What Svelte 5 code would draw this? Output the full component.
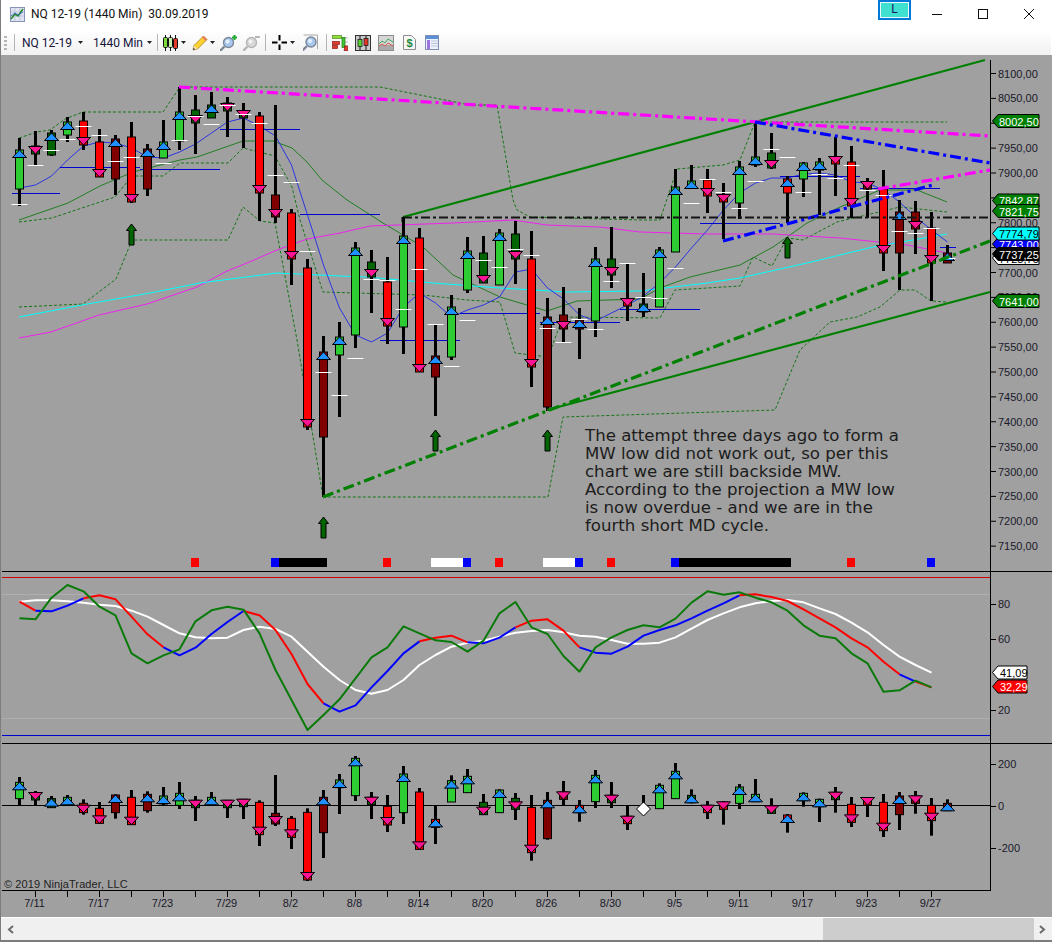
<script>
  const L = '#2ecc33', D = '#006400', R = '#ff0000', M = '#800000';
  const bx = (i) => 19.5 + 16 * i;

  // wick top, wick bottom, body top, body bottom, colour, marker, white tick
  const main = [
    [138,206,150,189,L,'u',204],[131,165,146,154,D,'d',165],[130,156,133,155,D,'u',150],[117,142,122,135,L,'u',139],
    [112,150,121,145,R,'d',126],[129,177,142,177,R,'d',135],[135,195,139,179,M,'u',161],[122,203,137,202,R,'d',157],
    [144,196,149,189,M,'u',null],[120,158,142,158,L,'u',163],[87,150,112,141,L,'u',140],[95,154,110,123,D,'d',116],
    [92,118,105,118,D,'u',124],[97,137,103,111,D,'d',105],[103,148,111,118,D,'d',114],[112,221,116,193,R,'d',123],
    [105,223,195,217,M,'d',175],[209,285,213,259,R,'d',182],[259,430,268,427,R,'d',251],[336,497,352,437,M,'u',372],
    [322,417,337,355,L,'u',395],[242,348,248,335,L,'u',358],[250,313,262,277,D,'d',279],[257,344,282,326,R,'d',280],
    [217,354,236,327,L,'u',309],[228,372,238,372,R,'d',269],[325,416,356,377,M,'u',324],[295,360,307,357,L,'u',366],
    [237,293,251,290,L,'u',320],[236,283,253,283,D,'d',260],[229,285,233,285,L,'u',267],[221,284,234,259,D,'d',249],
    [231,387,259,367,R,'d',255],[298,411,317,407,M,'u',328],[287,343,315,329,M,'d',342],[308,359,320,329,M,'u',319],
    [247,337,259,321,L,'u',329],[227,288,259,275,D,'d',281],[264,321,299,306,R,'d',263],[273,317,304,312,D,'u',297],
    [247,307,250,307,L,'u',298],[169,252,187,252,L,'u',268],[165,188,181,188,L,'u',203],[169,213,180,196,R,'d',179],
    [183,239,195,202,R,'d',192],[161,219,167,203,L,'u',208],[122,167,157,165,L,'u',181],[133,169,153,168,D,'d',149],
    [176,223,179,193,R,'u',157],[162,197,163,179,L,'u',192],[158,215,162,170,L,'u',174],[137,196,157,164,R,'d',178],
    [146,218,162,206,R,'d',165],[178,218,182,189,M,'d',190],[170,271,189,253,R,'d',195],[200,290,212,253,M,'u',231],
    [201,254,212,229,M,'d',233],[212,301,228,263,R,'d',228],[245,263,253,263,M,'u',258]
  ];

  // same layout, in rows of the third panel (reference zoom units: y = 740 + v / 3)
  const osc = [
    [111,196,127,176,L,'u'],[153,195,161,180,D,'d'],[168,204,176,203,D,'u'],[165,196,172,195,L,'u'],
    [178,224,190,218,R,'d'],[186,250,205,250,R,'d'],[163,236,165,218,M,'u'],[150,254,172,254,R,'d'],
    [154,218,163,212,M,'u'],[141,195,168,192,L,'u'],[126,207,160,196,L,'u'],[168,243,181,203,D,'d'],
    [156,195,172,194,L,'u'],[181,234,181,203,D,'d'],[178,237,178,200,D,'d'],[181,318,187,284,R,'d'],
    [105,258,220,252,M,'d'],[228,327,235,292,R,'d'],[205,423,217,420,R,'d'],[150,354,172,278,M,'u'],
    [102,222,120,143,L,'u'],[48,183,55,167,L,'u'],[156,237,172,194,D,'d'],[165,276,199,255,R,'d'],
    [78,252,102,218,L,'u'],[144,330,156,328,R,'d'],[196,312,238,262,R,'u'],[106,186,122,186,L,'u'],
    [87,158,109,158,L,'u'],[162,224,187,224,D,'d'],[148,218,150,218,L,'u'],[159,240,175,208,D,'d'],
    [165,362,202,338,R,'d'],[156,299,181,296,M,'u'],[123,196,156,178,M,'d'],[180,245,196,218,R,'u'],
    [90,204,106,185,L,'u'],[126,204,166,188,D,'d'],[196,270,229,251,R,'d'],null,
    [130,206,136,206,L,'u'],[69,176,94,176,L,'u'],[148,190,166,188,D,'u'],[183,237,196,218,R,'d'],
    [183,254,186,208,R,'d'],[132,207,141,190,L,'u'],[117,186,163,185,L,'u'],[175,220,198,220,D,'d'],
    [222,278,225,245,R,'u'],[157,200,160,182,L,'u'],[176,246,178,200,L,'u'],[141,218,157,179,D,'d'],
    [171,261,193,247,R,'d'],[173,231,173,195,R,'d'],[162,291,187,272,R,'d'],[156,270,168,224,M,'u'],
    [153,221,168,190,M,'d'],[174,287,196,242,R,'d'],[178,212,190,212,M,'u']
  ].map((b) => (b ? b.map((v, k) => (k < 4 ? 740 + v / 3 : v)) : null));

  const ma = [188,185,176,160,146,142,143,148,157,158,152,144,133,122,118,126,136,165,215,265,308,335,342,333,307,293,303,317,310,305,297,272,269,288,299,315,321,313,305,296,283,267,248,230,210,193,183,178,178,174,173,175,182,183,190,202,217,230,242];
  const maPts = ma.map((y, i) => `${bx(i)},${y}`).join(' ');

  const magenta = '19,338 51,332 99,315 147,304 197,287 227,271 247,263 277,250 307,239 340,233 370,226 453,223 513,220 547,225 600,227 640,232 707,234 773,234 840,238 907,245 947,253';
  const cyan = '19,317 82,305 150,293 200,283 277,273 340,276 367,277 433,283 500,288 567,292 640,291 707,283 740,278 807,263 873,247 947,234';
  const midGreen = '19,220 68,203 100,186 133,172 180,160 197,157 243,141 273,141 292,148 307,162 322,180 347,200 383,223 423,247 453,275 500,297 547,311 577,301 640,299 660,288 690,277 740,265 773,247 807,223 840,207 880,190 917,190 947,202';
  const dash1 = '19,138 37,132 50,130 65,119 83,112 163,112 180,87 380,87 470,105 497,105 513,200 517,210 530,217 640,220 660,220 677,169 723,165 740,160 755,122 947,122';
  const dash2 = '19,222 52,218 115,197 132,176 163,176 180,163 228,163 243,148 275,156 292,187 300,220 323,292 423,295 467,300 500,302 515,353 548,357 563,317 660,318 675,290 740,286 753,257 772,266 787,238 803,240 837,222 900,207 947,212';
  const dash3 = '19,307 83,304 116,279 132,240 228,240 243,207 260,221 275,223 297,340 323,497 548,497 563,417 775,410 800,350 830,322 857,317 880,307 900,290 915,290 931,301 947,302';

  const hlines = [[12,60,193],[60,140,167],[140,220,169],[220,300,129],[300,380,214],[380,460,340],[460,540,313],[540,620,322],[620,700,309],[700,780,223],[780,860,176],[860,940,188],[940,956,247]];
  const arrows = [[131.5,224],[323.5,517],[435.5,430],[547.5,430],[787.5,237]];
  const tape = [[191,8,'#f00'],[271,8,'#00f'],[279,48,'#000'],[383,8,'#f00'],[431,32,'#fff'],[463,8,'#00f'],[495,8,'#f00'],[543,32,'#fff'],[575,8,'#00f'],[607,8,'#f00'],[671,8,'#00f'],[679,112,'#000'],[847,8,'#f00'],[927,8,'#00f']];

  const note = ['The attempt three days ago to form a','MW low did not work out, so per this','chart we are still backside MW.','According to the projection a MW low','is now overdue - and we are in the','fourth short MD cycle.'];

  const prices = [];
  for (let p = 8100; p >= 7150; p -= 50) prices.push({ y: 73.5 + (8100 - p) * 0.4975, p, t: `${p},00` });

  // second panel series (reference zoom units: y = 550 + v / 3)
  const sWhite = [155,151,151,154,158,164,168,182,200,225,250,262,265,263,240,230,237,260,305,350,390,420,431,420,390,345,315,290,278,272,260,248,243,240,247,257,260,270,281,281,278,262,236,210,190,172,160,153,150,157,175,192,218,247,285,320,345,368];
  const sMain = [155,182,184,167,145,136,148,200,253,292,316,293,252,216,183,196,240,312,402,460,485,466,412,363,310,274,263,257,277,280,263,232,212,208,242,292,308,311,290,257,240,226,205,182,160,136,133,141,153,178,205,232,265,292,335,373,395,412];
  const sGreen = [205,208,143,105,124,170,196,310,340,316,298,214,181,170,179,250,360,450,540,495,448,385,322,292,229,250,271,276,305,272,190,156,232,252,318,365,292,262,240,226,232,206,158,124,134,127,143,157,182,226,257,265,310,340,425,421,392,412];
  const sPts = (a, from = 0, to = a.length - 1) => a.slice(from, to + 1).map((v, k) => `${bx(from + k)},${550 + v / 3}`).join(' ');
  const ranges = [[0,1,'#f00'],[1,4,'#00f'],[4,9,'#f00'],[9,14,'#00f'],[14,19,'#f00'],[19,25,'#00f'],[25,28,'#f00'],[28,31,'#00f'],[31,35,'#f00'],[35,45,'#00f'],[45,55,'#f00'],[55,56,'#00f'],[56,57,'#f00']];

  const dates = ['7/11','7/17','7/23','7/29','8/2','8/8','8/14','8/20','8/26','8/30','9/5','9/11','9/17','9/23','9/27'];
  const ticks = Array.from({ length: 29 }, (_, k) => 35 + 32 * k);

  const tags = [
    { y: 121, t: '8002,50', fill: '#008000', fg: '#fff' },
    { y: 301, t: '7641,00', fill: '#008000', fg: '#fff' },
    { y: 200.5, t: '7842,87', fill: '#008000', fg: '#fff' },
    { y: 211, t: '7821,75', fill: '#008000', fg: '#fff' },
    { y: 258, t: '7728,75', fill: '#fff', fg: '#000' },
    { y: 244, t: '7743,00', fill: '#0000ff', fg: '#fff' },
    { y: 233.5, t: '7774,79', fill: '#00ffff', fg: '#000' },
    { y: 254, t: '7737,25', fill: '#000', fg: '#fff' }
  ];
  const tagPath = (y, r = 1039) => `M992.5,${y} L998,${y - 6.5} H${r} V${y + 6.5} H998 Z`;
  const tri = (x, top, dir) =>
    dir === 'u'
      ? `${x},${top} ${x + 7},${top + 7.5} ${x - 7},${top + 7.5}`
      : `${x - 7},${top - 7.5} ${x + 7},${top - 7.5} ${x},${top}`;
  const arrow = (x, y) => `M${x},${y} l5,6.5 h-2.5 v14.5 h-5 v-14.5 h-2.5 Z`;
</script>

{#snippet caret()}
  <svg class="caret" width="5" height="3" viewBox="0 0 5 3"><path d="M0 0h5L2.5 3z" fill="#222" /></svg>
{/snippet}
{#snippet lens(cx, cy, fill, ring)}
  <line x1={cx - 4} y1={cy + 4} x2={cx - 8.5} y2={cy + 8.5} stroke={ring} stroke-width="2.4" />
  <circle {cx} {cy} r="5" fill={fill} stroke={ring} stroke-width="1.4" />
  <circle cx={cx - 1} cy={cy - 1} r="2" fill="#fff" opacity=".7" />
{/snippet}

<div class="window">
  <header class="title">
    <svg class="appicon" width="15" height="15" viewBox="0 0 15 15">
      <rect x=".5" y=".5" width="14" height="14" fill="#dfe4f2" stroke="#8a94b8" />
      <path d="M1 5h13M1 9h13M5 1v13M10 1v13" stroke="#b3bbd4" stroke-width=".7" />
      <path d="M1 12l4-5 3 2 5-7" fill="none" stroke="#2c8c2c" stroke-width="1.6" />
      <path d="M1 9l4-3 3 2 5-3" fill="none" stroke="#2f63b8" stroke-width=".9" />
    </svg>
    <span class="caption">NQ 12-19 (1440 Min)&nbsp; 30.09.2019</span>
    <button class="lbtn">L</button>
    <div class="ctrl">
      <svg width="10" height="10" viewBox="0 0 10 10"><path d="M0 5.5h10" stroke="#111" /></svg>
    </div>
    <div class="ctrl">
      <svg width="10" height="10" viewBox="0 0 10 10"><rect x=".5" y=".5" width="9" height="9" fill="none" stroke="#111" /></svg>
    </div>
    <div class="ctrl">
      <svg width="10" height="10" viewBox="0 0 10 10"><path d="M0 0l10 10M10 0L0 10" stroke="#111" /></svg>
    </div>
  </header>

  <nav class="toolbar">
    <span class="grip"></span>
    <span class="sep s1"></span>
    <span class="tbtext t1">NQ 12-19</span>
    {@render caret()}
    <span class="tbtext t2">1440 Min</span>
    {@render caret()}
    <span class="sep s2"></span>
    <svg class="i-candles" width="15" height="16" viewBox="0 0 15 16">
      <path d="M2.5 0v16M7.5 0v16M12.5 0v16" stroke="#111" stroke-width="1" />
      <rect x=".5" y="2.5" width="4" height="10" rx="1" fill="#7ddc3c" stroke="#111" />
      <rect x="5.5" y="2.5" width="4" height="10" rx="1" fill="#c9f0a8" stroke="#111" />
      <rect x="10.5" y="3.5" width="4" height="10" rx="1" fill="#e83a2a" stroke="#111" />
    </svg>
    {@render caret()}
    <svg class="i-pencil" width="16" height="16" viewBox="0 0 16 16">
      <path d="M1 15l1-4.5L11.5 1 15 4.5 5.5 14z" fill="#ffd234" stroke="#a6801a" stroke-width=".8" />
      <path d="M1 15l1-4.5L5.5 14z" fill="#f1dfb4" />
      <path d="M1 15l.6-2.2L3.2 14.4z" fill="#333" />
      <path d="M11.5 1L15 4.5 13.6 5.9 10 2.5z" fill="#e9795d" />
    </svg>
    {@render caret()}
    <svg class="i-zin" width="17" height="17" viewBox="0 0 17 17">
      {@render lens(8.5, 8.5, '#a9c8ef', '#7c8797')}
      <path d="M12 3.5h5M14.5 1v5" stroke="#1eab2f" stroke-width="2" />
    </svg>
    <svg class="i-zout" width="17" height="17" viewBox="0 0 17 17">
      {@render lens(8.5, 8.5, '#d8d8d8', '#b5b5b5')}
      <path d="M12 3h5" stroke="#b5b5b5" stroke-width="2" />
    </svg>
    <span class="sep s3"></span>
    <svg class="i-cross" width="15" height="15" viewBox="0 0 15 15">
      <path d="M0 7.5h5.5M9.5 7.5H15M7.5 0v5.5M7.5 9.5V15" stroke="#000" stroke-width="2" />
    </svg>
    {@render caret()}
    <svg class="i-zbox" width="15" height="17" viewBox="0 0 15 17">
      <path d="M.5 1h14v14" fill="none" stroke="#a8a8a8" />
      {@render lens(8, 8, '#a9c8ef', '#7c8797')}
    </svg>
    <span class="sep s4"></span>
    <svg class="i-ind" width="16" height="17" viewBox="0 0 16 17">
      <path d="M8 4h8M11 8h5M11 12h5M11 16h5" stroke="#bbb" />
      <rect x=".5" y="1.5" width="9" height="3" fill="#8fdc3a" stroke="#4d8c1e" stroke-width=".7" />
      <rect x=".5" y="7.5" width="7" height="3" fill="#e23a2a" stroke="#8c1e14" stroke-width=".7" />
      <rect x=".5" y="11.5" width="5" height="3" fill="#e23a2a" stroke="#8c1e14" stroke-width=".7" />
      <rect x="10" y="3.5" width="3" height="10" fill="#3cc92f" stroke="#1e7a14" stroke-width=".7" />
      <rect x="12.5" y="12" width="3" height="5" fill="#e23a2a" stroke="#8c1e14" stroke-width=".7" />
    </svg>
    <svg class="i-box1" width="16" height="16" viewBox="0 0 16 16">
      <rect x=".5" y=".5" width="15" height="15" fill="#c9c9c9" stroke="#333" />
      <path d="M5 1v14M11 1v14" stroke="#111" />
      <rect x="3" y="4.5" width="4" height="7" fill="#58d22e" stroke="#111" stroke-width=".7" />
      <rect x="9" y="3.5" width="4" height="7" fill="#e23a2a" stroke="#111" stroke-width=".7" />
    </svg>
    <svg class="i-box2" width="16" height="16" viewBox="0 0 16 16">
      <rect x=".5" y=".5" width="15" height="15" fill="#d6d6d6" stroke="#8d8d8d" />
      <rect x="1" y="10" width="14" height="5" fill="#a9a9a9" />
      <path d="M1 9l3-3 3 2 3-4 5 3" fill="none" stroke="#3fa85f" />
      <path d="M1 11l3-2 3 2 3-3 5 3" fill="none" stroke="#d9534a" />
    </svg>
    <svg class="i-doc" width="13" height="15" viewBox="0 0 13 15">
      <path d="M.5.5h8l4 4v10H.5z" fill="#f7f7f7" stroke="#8d8d8d" />
      <text x="6.5" y="12" class="dollar">$</text>
    </svg>
    <svg class="i-table" width="14" height="15" viewBox="0 0 14 15">
      <rect x=".5" y=".5" width="13" height="14" fill="#eef3fb" stroke="#7f8fb5" />
      <rect x="1" y="1" width="12" height="3" fill="#5b8fd6" />
      <rect x="2" y="5" width="3" height="9" fill="#9d74e0" />
      <path d="M6 6h7M6 8.5h7M6 11h7" stroke="#b7c4dd" />
    </svg>
  </nav>

  <svg class="chart" viewBox="1 55 1051 862" width="1051" height="862">
    <rect x="1" y="55" width="1051" height="862" fill="#a0a0a0" />

    <!-- price panel indicators -->
    <polyline class="dsh" points={dash1} />
    <polyline class="dsh" points={dash2} />
    <polyline class="dsh" points={dash3} />
    <polyline class="thin" stroke="#217e21" points={midGreen} />
    <polyline class="thin" stroke="#ee22ee" points={magenta} />
    <polyline class="thin" stroke="#00ffff" points={cyan} />
    <polyline class="thin" stroke="#2b35e0" points={maPts} />
    {#each hlines as h}
      <line x1={h[0]} x2={h[1]} y1={h[2] + 0.5} y2={h[2] + 0.5} stroke="#0000d0" />
    {/each}

    {#each main as b, i}
      <rect x={bx(i) - 1.5} y={b[0]} width="3" height={b[1] - b[0]} fill="#000" />
      <rect class="body" x={bx(i) - 4} y={b[2]} width="8" height={b[3] - b[2]} fill={b[4]} />
      <polygon class="mk" fill={b[5] === 'u' ? '#1e90ff' : '#ff1493'} points={tri(bx(i), b[5] === 'u' ? b[2] : b[3], b[5])} />
    {/each}
    {#each main as b, i}
      {#if b[6]}
        <line x1={bx(i) - 8} x2={bx(i) + 8} y1={b[6] + 0.5} y2={b[6] + 0.5} stroke="#fff" />
      {/if}
    {/each}
    {#each arrows as a}
      <path d={arrow(a[0], a[1])} fill="#006400" stroke="#000" />
    {/each}

    <!-- drawing tools -->
    <line class="solid" x1="403" y1="217" x2="985" y2="60" />
    <line class="solid" x1="547" y1="410" x2="990" y2="292" />
    <line class="dd" stroke="#008000" x1="323" y1="497" x2="990" y2="241" />
    <line class="dd mag" x1="179" y1="87" x2="990" y2="136" />
    <line class="dd" stroke="#0000ff" x1="755" y1="122" x2="990" y2="163" />
    <line class="dd" stroke="#0000ff" x1="723" y1="241" x2="933" y2="185" />
    <line class="dd mag" x1="878" y1="189" x2="990" y2="170" />
    <line class="hl" x1="403" y1="217.5" x2="990" y2="217.5" />
    <line x1="403" y1="217" x2="403" y2="222" stroke="#000" stroke-width="3" />

    {#each note as line, i}
      <text class="note" x="585" y={441 + i * 18}>{line}</text>
    {/each}

    {#each tape as t}
      <rect x={t[0]} y="558" width={t[1]} height="9" fill={t[2]} />
    {/each}

    <!-- stochastic panel -->
    <line x1="2" x2="990" y1="577.5" y2="577.5" stroke="#cc0000" />
    <line x1="2" x2="990" y1="594.5" y2="594.5" stroke="#b0b0b0" />
    <line x1="2" x2="990" y1="718.5" y2="718.5" stroke="#b0b0b0" />
    <line x1="2" x2="990" y1="735.5" y2="735.5" stroke="#0000cc" />
    <polyline class="st" stroke="#fff" points={sPts(sWhite)} />
    {#each ranges as r}
      <polyline class="st" stroke={r[2]} points={sPts(sMain, r[0], r[1])} />
    {/each}
    <polyline class="st" stroke="#0a7a0a" points={sPts(sGreen)} />

    <!-- third panel -->
    <line x1="2" x2="990" y1="805.5" y2="805.5" stroke="#000" />
    {#each osc as b, i}
      {#if b}
        <rect x={bx(i) - 1.5} y={b[0]} width="3" height={b[1] - b[0]} fill="#000" />
        <rect class="body" x={bx(i) - 4} y={b[2]} width="8" height={b[3] - b[2]} fill={b[4]} />
        <polygon class="mk" fill={b[5] === 'u' ? '#1e90ff' : '#ff1493'} points={tri(bx(i), b[5] === 'u' ? b[2] : b[3], b[5])} />
      {:else}
        <rect x={bx(i) - 1.5} y="795" width="3" height="14" fill="#000" />
        <polygon points="{bx(i)},802 {bx(i) + 7},809 {bx(i)},816 {bx(i) - 7},809" fill="#fff" stroke="#000" />
      {/if}
    {/each}

    <!-- frames and axes -->
    <line x1="2" x2="1052" y1="571.5" y2="571.5" stroke="#000" />
    <line x1="2" x2="1052" y1="743.5" y2="743.5" stroke="#000" />
    <line x1="2" x2="990" y1="890.5" y2="890.5" stroke="#000" />
    <line x1="990.5" x2="990.5" y1="60" y2="891" stroke="#000" />
    <text class="copy" x="4" y="888">© 2019 NinjaTrader, LLC</text>

    {#each ticks as t}
      <line x1={t + 0.5} x2={t + 0.5} y1="890" y2="897" stroke="#000" />
    {/each}
    {#each dates as d, k}
      <text class="date" x={34.5 + 64 * k} y="907">{d}</text>
    {/each}

    {#each prices as p}
      <line x1="990" x2="996" y1={p.y} y2={p.y} stroke="#000" />
      {#if p.p !== 8000 && p.p !== 7750}
        <text class="axis" x="998" y={p.y + 4}>{p.t}</text>
      {/if}
    {/each}
    {#each tags as g}
      <path d={tagPath(g.y)} fill={g.fill} stroke="#000" />
      <text class="tagt" x="999" y={g.y + 4.5} fill={g.fg}>{g.t}</text>
    {/each}

    {#each [[604,'80'],[639,'60'],[710,'20']] as a}
      <line x1="990" x2="996" y1={a[0] + 0.5} y2={a[0] + 0.5} stroke="#000" />
      <text class="axis" x="998" y={a[0] + 4}>{a[1]}</text>
    {/each}
    <path d={tagPath(672.5, 1027)} fill="#fff" stroke="#000" />
    <text class="tagt" x="1000" y="677" fill="#000">41,09</text>
    <path d={tagPath(686.5, 1027)} fill="#f00" stroke="#000" />
    <text class="tagt" x="1000" y="691" fill="#fff">32,29</text>

    {#each [[764,'200'],[806,'0'],[848,'-200']] as a}
      <line x1="990" x2="996" y1={a[0] + 0.5} y2={a[0] + 0.5} stroke="#000" />
      <text class="axis" x="998" y={a[0] + 3.5}>{a[1]}</text>
    {/each}
  </svg>

  <div class="scroll">
    <svg class="chev" width="7" height="9" viewBox="0 0 7 9"><path d="M6 1L2 4.5 6 8" fill="none" stroke="#6b6b6b" stroke-width="2" /></svg>
    <span class="track"></span>
    <span class="thumb"></span>
    <svg class="chev" width="7" height="9" viewBox="0 0 7 9"><path d="M1 1l4 3.5L1 8" fill="none" stroke="#6b6b6b" stroke-width="2" /></svg>
  </div>
</div>

<style>
  :global(body) {
    margin: 0;
    background: #fff;
    font-family: Roboto, "Liberation Sans", Arial, sans-serif;
  }
  .window {
    width: 1052px;
    height: 942px;
    box-sizing: border-box;
    display: flex;
    flex-direction: column;
    border-left: 1px solid #7c7c7c;
    border-bottom: 2px solid #7c7c7c;
    background: #fff;
    overflow: hidden;
  }
  .title {
    height: 30px;
    flex: none;
    display: flex;
    align-items: flex-start;
    background: #fff;
    padding-left: 9px;
  }
  .appicon { margin-top: 7px; }
  .caption {
    margin: 7px 0 0 6px;
    font-size: 12px;
    line-height: 15px;
    color: #111;
    white-space: nowrap;
  }
  .lbtn {
    margin-left: auto;
    margin-right: 3px;
    width: 33px;
    height: 20px;
    padding: 0 0 2px;
    border: 2px solid #0078d7;
    outline: 1px solid #e6fbf9;
    outline-offset: -3px;
    background: #40e0d0;
    color: #14145a;
    font: 12px Roboto, sans-serif;
  }
  .ctrl {
    width: 46px;
    height: 29px;
    display: flex;
    align-items: center;
    justify-content: center;
    padding-bottom: 1px;
    box-sizing: border-box;
  }
  .toolbar {
    height: 25px;
    flex: none;
    display: flex;
    align-items: center;
    padding-left: 3px;
    margin-right: 1px;
    background: linear-gradient(#fff, #f1f1f1);
    box-sizing: border-box;
  }
  .grip {
    width: 3px;
    height: 14px;
    background: repeating-linear-gradient(#b5b5b5 0 2px, transparent 2px 4px);
  }
  .sep { width: 1px; height: 17px; background: #b5b5b5; flex: none; }
  .s1 { margin: 0 7px; }
  .s2 { margin: 0 5px 0 5px; }
  .s3 { margin: 0 6px 0 5px; }
  .s4 { margin: 0 5px 0 8px; }
  .tbtext { font-size: 12px; color: #14143c; white-space: nowrap; }
  .t1 { width: 50px; margin-left: 0; }
  .t2 { width: 48px; margin-left: 10px; }
  .caret { flex: none; margin-left: 6px; }
  .i-candles + .caret { margin-left: 3px; }
  .i-pencil { margin-left: 6px; }
  .i-pencil + .caret { margin-left: 2px; }
  .i-zin { margin-left: 5px; }
  .i-zout { margin-left: 6px; }
  .i-cross + .caret { margin-left: 3px; }
  .i-zbox { margin-left: 8px; }
  .i-box1 { margin-left: 7px; }
  .i-box2 { margin-left: 7px; }
  .i-doc { margin-left: 9px; }
  .i-table { margin-left: 9px; }
  .dollar { font: bold 11px "Liberation Sans", sans-serif; fill: #1c8a3a; text-anchor: middle; }

  .chart { display: block; flex: none; }
  polyline { fill: none; }
  .dsh { stroke: #167516; stroke-width: 1; stroke-dasharray: 3 2; }
  .thin { stroke-width: 1; }
  .st { stroke-width: 2; stroke-linejoin: round; }
  .body { stroke: #000; stroke-width: 1; }
  .mk { stroke: #000; stroke-width: 1; }
  .solid { stroke: #008000; stroke-width: 2.2; }
  .dd { stroke-width: 3.2; stroke-dasharray: 11 4 3 4; }
  .mag { stroke: #ff00ff; }
  .hl { stroke: #141414; stroke-width: 2; stroke-dasharray: 9 3 3 3; }
  .note { font: 16.6px "DejaVu Sans", sans-serif; fill: #1c1c1c; }
  .copy { font: 11px "Liberation Sans", sans-serif; fill: #222; letter-spacing: .1px; }
  .date { font: 11px "Liberation Sans", sans-serif; fill: #1a1a2a; text-anchor: middle; }
  .axis { font: 11px "Liberation Sans", sans-serif; fill: #1a1a2a; }
  .tagt { font: 11px "Liberation Sans", sans-serif; }

  .scroll {
    height: 22px;
    flex: none;
    margin-top: 1px;
    display: flex;
    align-items: center;
    background: #f0f0f0;
    padding: 0 6px;
    box-sizing: border-box;
  }
  .track { width: 809px; }
  .thumb { width: 211px; height: 22px; background: #cdcdcd; margin-right: 5px; }
</style>
